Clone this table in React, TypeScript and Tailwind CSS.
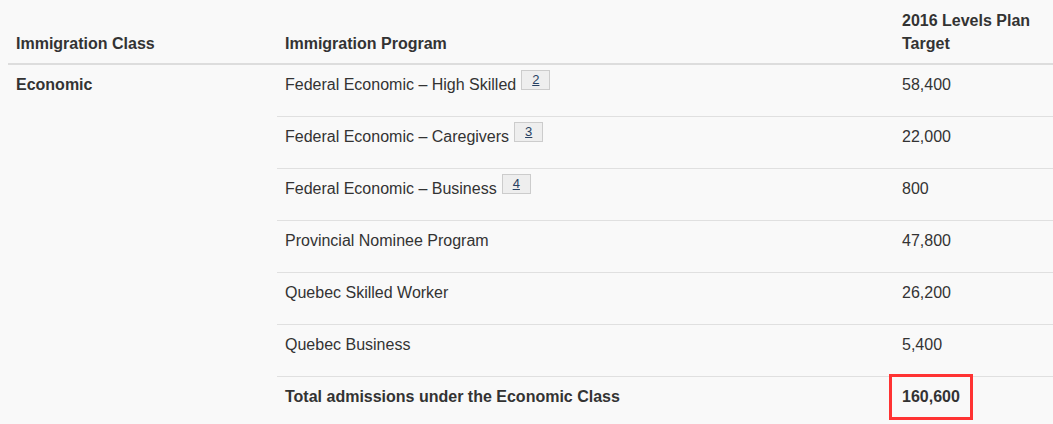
const rows: { program: string; note?: string; target: string }[] = [
  { program: "Federal Economic – High Skilled", note: "2", target: "58,400" },
  { program: "Federal Economic – Caregivers", note: "3", target: "22,000" },
  { program: "Federal Economic – Business", note: "4", target: "800" },
  { program: "Provincial Nominee Program", target: "47,800" },
  { program: "Quebec Skilled Worker", target: "26,200" },
  { program: "Quebec Business", target: "5,400" },
];

function Footnote({ n }: { n: string }) {
  return (
    <span className="relative -top-[3px] ml-[5px] inline-block h-[20px] border border-[#cccccc] bg-[#eeeeee] px-[10px] align-top text-[13px] leading-[18px]">
      <a href="#" className="text-[#284162] underline">
        {n}
      </a>
    </span>
  );
}

export default function App() {
  return (
    <div className="min-h-[424px] overflow-hidden bg-[#f9f9f9] font-['Liberation_Sans',Arial,sans-serif] text-[16px] leading-[23px] text-[#333333]">
      <div className="ml-2 grid w-[1045px] grid-cols-[269px_617px_159px]">
        {/* header */}
        <div className="flex items-end border-b-2 border-[#dddddd] px-2 pt-[9px] pb-2 font-bold">
          Immigration Class
        </div>
        <div className="flex items-end border-b-2 border-[#dddddd] px-2 pt-[9px] pb-2 font-bold">
          Immigration Program
        </div>
        <div className="flex items-end border-b-2 border-[#dddddd] px-2 pt-[9px] pb-2 font-bold">
          2016 Levels Plan Target
        </div>

        {/* economic class */}
        <div className="row-span-7 px-2 pt-2 font-bold">Economic</div>
        {rows.map((r) => (
          <div key={r.program} className="contents">
            <div className="border-b border-[#e0e0e0] px-2 pt-2 pb-5">
              {r.program}
              {r.note && <Footnote n={r.note} />}
            </div>
            <div className="border-b border-[#e0e0e0] px-2 pt-2 pb-5">
              {r.target}
            </div>
          </div>
        ))}
        <div className="px-2 pt-2 pb-5 font-bold">
          Total admissions under the Economic Class
        </div>
        <div className="relative px-2 pt-2 pb-5 font-bold">
          160,600
          <span className="absolute -top-[3px] -left-[5px] h-[46px] w-[84px] border-[3px] border-[#ff3333]" />
        </div>
      </div>
    </div>
  );
}
